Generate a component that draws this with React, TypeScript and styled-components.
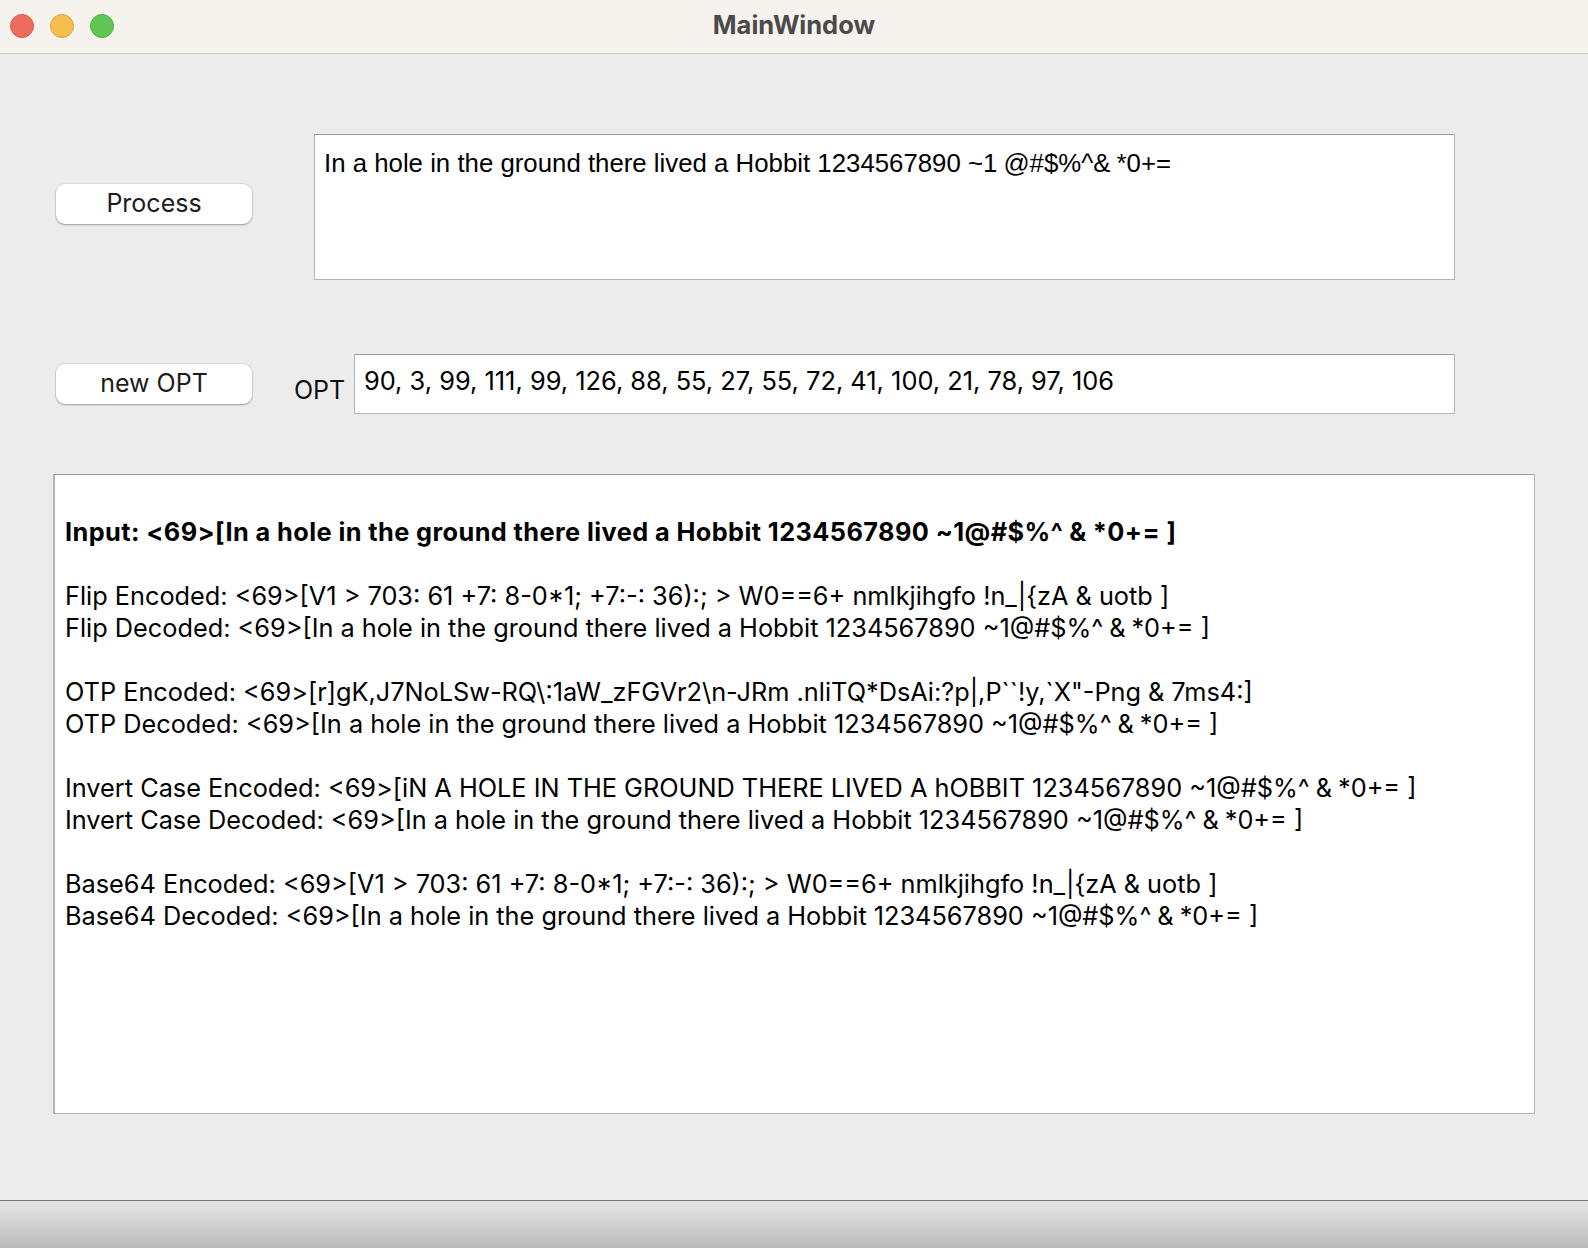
import styled, { createGlobalStyle } from "styled-components";
import { Fragment, ReactNode } from "react";

const GlobalStyle = createGlobalStyle`
  html, body {
    margin: 0;
    padding: 0;
    background: #ececec;
  }
  * {
    box-sizing: border-box;
  }
`;

const Window = styled.div`
  width: 1588px;
  height: 1248px;
  display: flex;
  flex-direction: column;
  background: #ececec;
  overflow: hidden;
`;

const TitleBar = styled.div`
  height: 54px;
  flex: none;
  position: relative;
  display: flex;
  align-items: center;
  justify-content: center;
  background: #f6f2ee;
  border-bottom: 1px solid #c9c7c5;
`;

const Lights = styled.div`
  position: absolute;
  left: 10px;
  top: 14px;
  display: flex;
  gap: 16px;
`;

const Light = styled.span<{ $fill: string; $edge: string }>`
  width: 24px;
  height: 24px;
  border-radius: 50%;
  background: ${(p) => p.$fill};
  border: 1px solid ${(p) => p.$edge};
`;

const Title = styled.div`
  font-family: Inter, "Liberation Sans", sans-serif;
  font-weight: 700;
  font-size: 25.5px;
  color: #4a4a4a;
  margin: 0 0 4px 0;
`;

const Content = styled.div`
  flex: 1;
  display: flex;
  flex-direction: column;
  padding: 80px 0 0 53px;
`;

const Row = styled.div<{ $height: number; $top?: number }>`
  display: flex;
  align-items: flex-start;
  height: ${(p) => p.$height}px;
  margin-top: ${(p) => p.$top || 0}px;
`;

const PushButton = styled.button<{ $top: number }>`
  width: 196px;
  height: 40px;
  margin: ${(p) => p.$top}px 0 0 3px;
  background: #ffffff;
  border: none;
  border-radius: 9px;
  box-shadow: 0 0 0 1px rgba(0, 0, 0, 0.06), 0 1px 2px rgba(0, 0, 0, 0.3);
  font-family: Inter, "Liberation Sans", sans-serif;
  font-size: 25px;
  color: #1c1c1c;
  padding: 0 0 2px;
`;

const Field = styled.div<{ $width: number; $height: number; $left: number }>`
  width: ${(p) => p.$width}px;
  height: ${(p) => p.$height}px;
  margin-left: ${(p) => p.$left}px;
  background: #ffffff;
  border: 1px solid #b4b4b4;
  border-top-color: #9c9c9c;
  color: #000;
  white-space: pre;
  overflow: hidden;
`;

const PlainText = styled.div`
  font-family: "Liberation Sans", Arial, sans-serif;
  font-size: 25.8px;
  line-height: 30px;
  padding: 13px 0 0 9px;
`;

const OptText = styled.div`
  font-family: Inter, "Liberation Sans", sans-serif;
  font-size: 25.4px;
  line-height: 30px;
  padding: 11px 0 0 9px;
`;

const FieldLabel = styled.label`
  align-self: flex-end;
  width: 60px;
  margin: 0 0 9px 42px;
  font-family: Inter, "Liberation Sans", sans-serif;
  font-size: 25px;
  line-height: 30px;
  color: #111;
`;

const Output = styled.div`
  width: 1482px;
  height: 640px;
  margin-top: 60px;
  background: #ffffff;
  border: 1px solid #b4b4b4;
  border-left-width: 2px;
  border-top-color: #9c9c9c;
  padding: 9px 0 0 10px;
  font-family: Inter, "Liberation Sans", sans-serif;
  font-size: 25.3px;
  line-height: 32px;
  color: #000;
  overflow: hidden;
`;

const Line = styled.div<{ $bold?: boolean }>`
  height: 32px;
  white-space: pre;
  font-weight: ${(p) => (p.$bold ? 700 : 400)};
  letter-spacing: ${(p) => (p.$bold ? "0.42px" : "0")};
`;

// the mac font falls back for a few symbols, which leaves air around them
const Spaced = styled.span<{ $before: number; $after: number }>`
  margin-left: ${(p) => p.$before}px;
  margin-right: ${(p) => p.$after}px;
`;

const BottomBar = styled.div`
  height: 48px;
  flex: none;
  border-top: 1px solid #777777;
  background: linear-gradient(#e6e6e6, #bababa);
`;

const Hobbit = ({ caps }: { caps?: boolean }) => (
  <>
    {caps
      ? "iN A HOLE IN THE GROUND THERE LIVED A hOBBIT 1234567890 ~1@#$%^"
      : "In a hole in the ground there lived a Hobbit 1234567890 ~1@#$%^"}
    <Spaced $before={6} $after={6}>&amp;</Spaced>
    {"*0+= "}
  </>
);

const flip = "V1 > 703: 61 +7: 8-0*1; +7:-: 36):; > W0==6+ nmlkjihgfo !n_|{zA & uotb ";

const Otp = () => (
  <>
    {"r]gK,J7NoLSw-RQ\\:1aW_zFGVr2\\n-JRm .nliTQ*DsAi:?p|,P``!y,`X\"-Png"}
    <Spaced $before={7} $after={7}>&amp;</Spaced>
    {"7ms4:"}
  </>
);

const lines: { label: string; body: ReactNode; bold?: boolean }[] = [
  { label: "", body: null },
  { label: "Input", body: <Hobbit />, bold: true },
  { label: "", body: null },
  { label: "Flip Encoded", body: flip },
  { label: "Flip Decoded", body: <Hobbit /> },
  { label: "", body: null },
  { label: "OTP Encoded", body: <Otp /> },
  { label: "OTP Decoded", body: <Hobbit /> },
  { label: "", body: null },
  { label: "Invert Case Encoded", body: <Hobbit caps /> },
  { label: "Invert Case Decoded", body: <Hobbit /> },
  { label: "", body: null },
  { label: "Base64 Encoded", body: flip },
  { label: "Base64 Decoded", body: <Hobbit /> },
];

export default function App() {
  return (
    <Window>
      <GlobalStyle />
      <TitleBar>
        <Lights>
          <Light $fill="#ee6b60" $edge="#d9584e" />
          <Light $fill="#f6be50" $edge="#dea23a" />
          <Light $fill="#62c655" $edge="#4fae45" />
        </Lights>
        <Title>MainWindow</Title>
      </TitleBar>
      <Content>
        <Row $height={146}>
          <PushButton $top={50}>Process</PushButton>
          <Field $width={1141} $height={146} $left={62}>
            <PlainText>
              {"In a hole in the ground there lived a Hobbit 1234567890 ~1"}
              <Spaced $before={6} $after={0}>@</Spaced>
              {"#$%^&"}
              <Spaced $before={6} $after={0}>*</Spaced>
              {"0+="}
            </PlainText>
          </Field>
        </Row>
        <Row $height={60} $top={74}>
          <PushButton $top={10}>new OPT</PushButton>
          <FieldLabel>OPT</FieldLabel>
          <Field $width={1101} $height={60} $left={0}>
            <OptText>90, 3, 99, 111, 99, 126, 88, 55, 27, 55, 72, 41, 100, 21, 78, 97, 106</OptText>
          </Field>
        </Row>
        <Output>
          {lines.map((l, i) => (
            <Line key={i} $bold={l.bold}>
              {l.label ? (
                <Fragment>
                  {`${l.label}: <69>[`}
                  {l.body}
                  {"]"}
                </Fragment>
              ) : (
                ""
              )}
            </Line>
          ))}
        </Output>
      </Content>
      <BottomBar />
    </Window>
  );
}
